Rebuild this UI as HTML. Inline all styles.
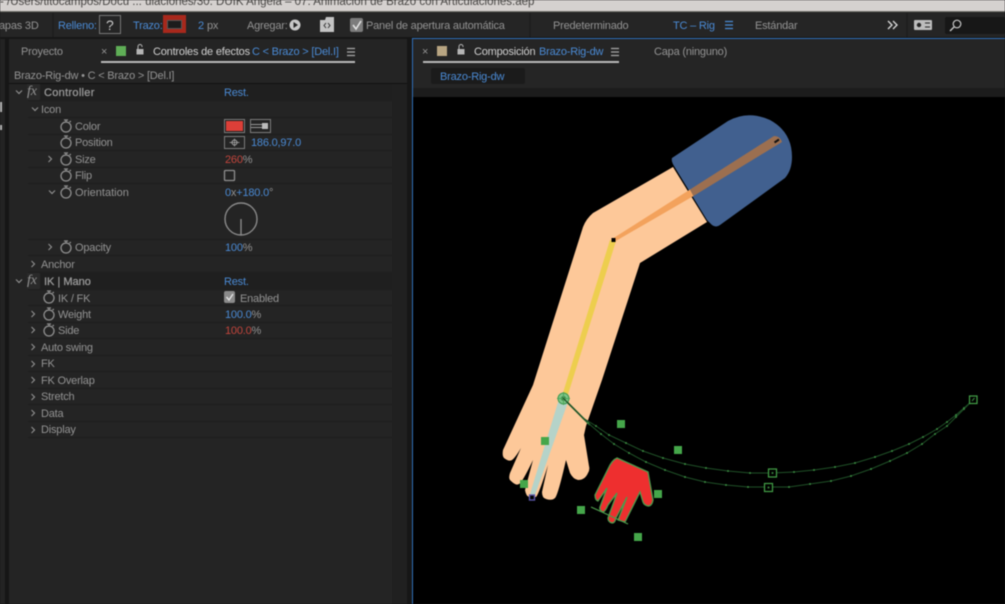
<!DOCTYPE html>
<html><head><meta charset="utf-8"><style>
html,body{margin:0;padding:0;background:#1a1a1a}
#p{position:relative;width:1005px;height:604px;overflow:hidden;background:#161616;font:11px/16px "Liberation Sans",sans-serif;letter-spacing:-.2px;color:#939393;filter:blur(.45px)}
#p span,#p b{position:absolute;white-space:nowrap;font-weight:normal}
.b{color:#4a8ad4}.r{color:#c2453c}.l{color:#cfcfcf}.f{color:#9c9c9c;-webkit-text-stroke:.25px #9c9c9c}
#p div{position:absolute}
#p i{font-style:normal}
.ln{left:28px;width:364px;height:1px;background:#1e1e1e}
.fx{font:italic 14px/14px "Liberation Serif",serif!important}
svg{position:absolute;left:0;top:0;overflow:visible}
</style></head><body><div id="p">
<div style="left:0;top:0;width:1005px;height:11px;background:#d5d1cf"></div>
<div style="left:0;top:11px;width:1005px;height:1px;background:#77756f"></div>
<div style="left:0;top:12px;width:1005px;height:25px;background:#252525"></div>
<span style="left:0;top:-5px;font-size:11.5px;line-height:14px;letter-spacing:0;color:#4a4846">- /Users/titocampos/Docu ... ulaciones/30. DUIK Angela – 07. Animación de Brazo con Articulaciones.aep</span>
<div style="left:9px;top:39px;width:398px;height:565px;background:#242424"></div>
<div style="left:0;top:39px;width:5px;height:565px;background:#232323"></div>
<div style="left:0;top:102px;width:2px;height:10px;background:#b5b5b5"></div>
<div style="left:0;top:125px;width:2px;height:5px;background:#b5b5b5"></div>
<div style="left:392px;top:84px;width:15px;height:520px;background:#202020"></div>
<div style="left:412px;top:38px;width:593px;height:566px;background:#252525"></div>
<div style="left:412px;top:38px;width:593px;height:1px;background:#2f6fb8"></div>
<div style="left:412px;top:38px;width:1px;height:566px;background:#2f6fb8"></div>
<div style="left:413px;top:88px;width:592px;height:9px;background:#1c1c1c"></div>
<div style="left:413px;top:97px;width:592px;height:507px;background:#000"></div>
<div style="left:9px;top:83px;width:398px;height:1px;background:#111"></div>
<div style="left:28px;top:84px;width:364px;height:17px;background:#1f1f1f"></div>
<div style="left:28px;top:272px;width:364px;height:17px;background:#1f1f1f"></div>
<div style="left:27px;top:84px;width:13px;height:16px;background:#2a2a2a"></div>
<div style="left:27px;top:273px;width:13px;height:16px;background:#2a2a2a"></div>
<div class="ln" style="top:100px"></div><div class="ln" style="top:117px"></div><div class="ln" style="top:134px"></div><div class="ln" style="top:150px"></div><div class="ln" style="top:167px"></div><div class="ln" style="top:183px"></div><div class="ln" style="top:239px"></div><div class="ln" style="top:255px"></div><div class="ln" style="top:272px"></div><div class="ln" style="top:289px"></div><div class="ln" style="top:305px"></div><div class="ln" style="top:322px"></div><div class="ln" style="top:338px"></div><div class="ln" style="top:355px"></div><div class="ln" style="top:371px"></div><div class="ln" style="top:388px"></div><div class="ln" style="top:404px"></div><div class="ln" style="top:421px"></div><div class="ln" style="top:437px"></div>
<span style="left:-1px;top:18px">apas 3D</span>
<span class="b" style="left:58px;top:18px">Relleno:</span>
<span class="b" style="left:133px;top:18px">Trazo:</span>
<span class="b" style="left:198px;top:18px">2</span><span style="left:207px;top:18px">px</span>
<span style="left:247px;top:18px">Agregar:</span>
<span style="left:366px;top:18px">Panel de apertura automática</span>
<span style="left:553px;top:18px">Predeterminado</span>
<span class="b" style="left:673px;top:18px">TC – Rig</span>
<span style="left:755px;top:18px">Estándar</span>
<span class="l" style="left:972px;top:18px">Buscar</span>
<div style="left:99px;top:15px;width:20px;height:17px;border:1px solid #777"></div>
<span style="left:106px;top:17px;color:#c8c8c8;font-size:14px">?</span>
<div style="left:163px;top:15px;width:23px;height:18px;background:#a8281c"></div>
<div style="left:167px;top:20px;width:13px;height:7px;background:#1c1c1c;border:1px solid #555"></div>
<div style="left:350px;top:18px;width:13px;height:14px;background:#7c7c7c;border-radius:2px"></div>
<div style="left:945px;top:17px;width:60px;height:17px;background:#171717;border-radius:2px"></div>
<span style="left:21px;top:44px">Proyecto</span>
<span style="left:101px;top:44px">×</span>
<span class="l" style="left:153px;top:44px">Controles de efectos</span>
<span class="b" style="left:252px;top:44px">C &lt; Brazo &gt; [Del.I]</span>
<div style="left:116px;top:46px;width:10px;height:10px;background:#5fae56"></div>
<div style="left:101px;top:61px;width:254px;height:2px;background:#b9b9b9"></div>
<span style="left:14px;top:68px">Brazo-Rig-dw • C &lt; Brazo &gt; [Del.I]</span>
<span style="left:422px;top:44px">×</span>
<div style="left:437px;top:46px;width:10px;height:10px;background:#b8a582"></div>
<span class="l" style="left:474px;top:44px">Composición</span>
<span class="b" style="left:539px;top:44px">Brazo-Rig-dw</span>
<div style="left:423px;top:61px;width:196px;height:2px;background:#b9b9b9"></div>
<span style="left:654px;top:44px">Capa (ninguno)</span>
<div style="left:431px;top:68px;width:94px;height:16px;background:#1b1b1b;border-radius:2px"></div>
<span class="b" style="left:440px;top:69px">Brazo-Rig-dw</span>

<span class="fx" style="left:27px;top:85px">fx</span><span class="f" style="left:44px;top:85px;letter-spacing:.3px">Controller</span><span class="b" style="left:224px;top:85px">Rest.</span>
<span style="left:41px;top:102px">Icon</span>
<span style="left:75px;top:119px">Color</span>
<span style="left:75px;top:135px">Position</span><span class="b" style="left:251px;top:135px">186.0,97.0</span>
<span style="left:75px;top:152px">Size</span><span style="left:225px;top:152px"><i class="r">260</i>%</span>
<span style="left:75px;top:168px">Flip</span>
<span style="left:75px;top:185px;letter-spacing:0">Orientation</span><span style="left:225px;top:185px"><i class="b">0</i>x<i class="b">+180.0</i>°</span>
<span style="left:75px;top:240px">Opacity</span><span style="left:225px;top:240px"><i class="b">100</i>%</span>
<span style="left:41px;top:257px">Anchor</span>
<span class="fx" style="left:27px;top:274px">fx</span><span class="f" style="left:44px;top:274px;letter-spacing:0">IK | Mano</span><span class="b" style="left:224px;top:274px">Rest.</span>
<span style="left:58px;top:291px">IK / FK</span><span style="left:240px;top:291px">Enabled</span>
<span style="left:58px;top:307px">Weight</span><span style="left:225px;top:307px"><i class="b">100.0</i>%</span>
<span style="left:58px;top:323px">Side</span><span style="left:225px;top:323px"><i class="r">100.0</i>%</span>
<span style="left:41px;top:340px">Auto swing</span>
<span style="left:41px;top:356px">FK</span>
<span style="left:41px;top:373px">FK Overlap</span>
<span style="left:41px;top:389px">Stretch</span>
<span style="left:41px;top:406px">Data</span>
<span style="left:41px;top:422px">Display</span>

<svg width="1005" height="604" viewBox="0 0 1005 604" fill="none">
<defs>
<g id="sw" stroke="#8f8f8f" stroke-width="1.300"><circle cx="0" cy="1" r="5"/><path d="M-2-6H2M0-6V-4M3.600-3.800L4.800-5"/></g>
<path id="cr" d="M-1.500-3L1.500 0L-1.500 3" stroke="#8d8d8d" stroke-width="1.200"/>
<path id="cd" d="M-3-1.500L0 1.500L3-1.500" stroke="#8d8d8d" stroke-width="1.200"/>
<g id="hb" stroke-width="1.200"><path d="M-4-3.500H4M-4 0H4M-4 3.500H4"/></g>
<rect id="gs" x="-4" y="-4" width="8" height="8" fill="#45a64a"/>
<marker id="dot" markerUnits="userSpaceOnUse" markerWidth="4" markerHeight="4" refX="2" refY="2"><circle cx="2" cy="2" r="1" fill="#3a8a40"/></marker>
</defs>
<!-- toolbar icons -->
<path d="M53 13V37M530 13V37M907 13V37" stroke="#1b1b1b"/>
<circle cx="295" cy="25" r="5.500" fill="#c8c8c8"/><path d="M293.500 22L298 25L293.500 28Z" fill="#252525"/>
<path d="M320 20H325L326 17H334V32H320Z" fill="#c4c4c4"/><path d="M326 23L324 25.500L326 28M328 23L330 25.500L328 28" stroke="#333"/>
<path d="M353 25L356 29L361 21" stroke="#e2e2e2" stroke-width="1.600"/>
<use href="#hb" x="729" y="25" stroke="#4a8ad4"/>
<path d="M888 21L892 25L888 29M893 21L897 25L893 29" stroke="#d5d5d5" stroke-width="1.400"/>
<rect x="914" y="20" width="18" height="10" rx="1" fill="#bdbdbd"/><circle cx="919" cy="25" r="2.200" fill="#252525"/><path d="M925 23H930M925 27H930" stroke="#252525"/>
<circle cx="957" cy="24" r="3.800" stroke="#c8c8c8" stroke-width="1.200"/><path d="M954 27L950 31" stroke="#c8c8c8" stroke-width="1.400"/>
<!-- tab icons -->
<rect x="136.500" y="49" width="7" height="5.500" fill="#b5b5b5"/><path d="M138 49V46.500A2 2 0 0 1 142 46.500V47" stroke="#b5b5b5"/>
<rect x="457.500" y="49" width="7" height="5.500" fill="#b5b5b5"/><path d="M459 49V46.500A2 2 0 0 1 463 46.500V47" stroke="#b5b5b5"/>
<use href="#hb" x="351" y="52" stroke="#a8a8a8"/><use href="#hb" x="615" y="52" stroke="#a8a8a8"/>
<!-- chevrons -->
<use href="#cd" x="19" y="92"/><use href="#cd" x="35" y="109"/><use href="#cr" x="50" y="159"/><use href="#cd" x="52" y="192"/><use href="#cr" x="50" y="247"/><use href="#cr" x="33" y="264"/><use href="#cd" x="19" y="281"/>
<use href="#cr" x="33" y="314"/><use href="#cr" x="33" y="330"/><use href="#cr" x="33" y="347"/><use href="#cr" x="33" y="364"/><use href="#cr" x="33" y="380"/><use href="#cr" x="33" y="397"/><use href="#cr" x="33" y="413"/><use href="#cr" x="33" y="430"/>
<!-- stopwatches -->
<use href="#sw" x="66" y="126"/><use href="#sw" x="66" y="142"/><use href="#sw" x="66" y="159"/><use href="#sw" x="66" y="175"/><use href="#sw" x="66" y="192"/><use href="#sw" x="66" y="247"/>
<use href="#sw" x="49" y="297"/><use href="#sw" x="49" y="314"/><use href="#sw" x="49" y="330"/>
<!-- controls -->
<rect x="224.500" y="119.500" width="20" height="13" stroke="#7c7c7c" fill="#1d1d1d"/><rect x="226" y="121" width="17" height="10" fill="#dc3f38"/>
<rect x="250.500" y="119.500" width="20" height="13" stroke="#7c7c7c"/><path d="M251 124.500H262M251 127.500H262" stroke="#999"/><rect x="262" y="123" width="6" height="6" fill="#bbb"/>
<rect x="224.500" y="136.500" width="20" height="12" stroke="#7c7c7c"/><circle cx="234.500" cy="142.500" r="2.500" stroke="#a8a8a8"/><path d="M229.500 142.500H239.500M234.500 138.500V146.500" stroke="#a8a8a8" stroke-width=".7"/>
<rect x="224.500" y="170.500" width="10" height="10" rx="1" stroke="#8f8f8f" stroke-width="1.300"/>
<circle cx="241" cy="219" r="16" stroke="#8a8a8a" stroke-width="1.400"/><path d="M241 219V235" stroke="#8a8a8a" stroke-width="1.400"/>
<rect x="224" y="291" width="11" height="12" rx="2" fill="#8a8a8a"/><path d="M226.500 297L229 300L233 294" stroke="#e0e0e0" stroke-width="1.400"/>
<!-- viewer -->
<path d="M673 167L593 213Q586 219 583 227L533 385L503 450Q502 456 504 458Q509 462 512 460Q515 458 521 448L510 473Q508 479 511 481Q516 486 519 484Q522 483 533 460L525 490Q526 496 529 497L536 497Q539 494 548 465L542 492Q542 498 546 499Q552 501 555 498Q558 495 566 460L570 473Q573 479 578 480Q585 480 588 473Q590 470 589 466L584 435L586 426L602 380L640 263L707 222Z" fill="#fdc899"/>
<path d="M672 158L728 121Q748 110 770 120Q792 132 792 157Q792 170 785 178L720 225Q716 228 712 225L707 220L674 166Q671 161 672 158Z" fill="#41608f"/>
<path d="M612 239L690 189.500L693.500 196L614 242Z" fill="#f3a25c"/>
<path d="M690 189.500L774 136Q780 136 782 142L693.500 196Z" fill="#9c6f50"/>
<path d="M774.500 142.500L779 139.500" stroke="#111" stroke-width="2"/>
<path d="M610 240L616 241L567.500 396L562 396Z" fill="#edce4e"/>
<rect x="611.500" y="238" width="4" height="4" fill="#000"/>
<path d="M559 399L568 402L535 495L530 494Z" fill="#b5d3c9"/>
<path d="M617 458L648 472L653 500Q652 506 648 506Q644 505 643 502L640 492L625 522L618 520L627 497L616 518Q615 523 612 523Q608 522 608 518L617 493L608 505Q605 512 603 512Q599 510 600 507L607 488L598 501Q595 500 595 495L608 469Q612 460 617 458Z" fill="#ee2f2f" stroke="#4d9a4c" stroke-width="1.300"/>
<path d="M591 507L628 524" stroke="#4d9a4c" stroke-width="1.200"/>
<rect x="529.500" y="495" width="5" height="5" stroke="#5a56a8" stroke-width="1.400" fill="#000"/>
<path d="M565 400L590 425" stroke="#2f6f38" stroke-width="1.800"/>
<circle cx="563.500" cy="398.500" r="5.500" fill="#7dc488" stroke="#3f9a50"/><circle cx="563.500" cy="398.500" r="2.500" fill="#3b8a48"/><path d="M557 398.500H570M563.500 392V405" stroke="#4fa75c"/>
<polyline points="563,398 583,418 596,426 609,435 626,443 643,451 663,458 685,464 706,468 728,471 750,473 772,473 794,472 814,470 835,467 855,463 875,457 892,451 909,444 923,437 937,429 947,422 956,415 964,408 973,400" stroke="#1f5027" marker-mid="url(#dot)"/>
<polyline points="563,398 588,423 601,434 614,444 629,453 646,462 665,470 685,477 705,482 726,485 748,487 768,487 789,487 810,484 831,481 851,476 871,469 890,461 907,453 922,444 935,434 947,426 956,417 964,409 973,400" stroke="#1f5027" marker-mid="url(#dot)"/>
<rect x="768.500" y="469" width="8" height="8" stroke="#43a047" stroke-width="1.200" fill="#000"/><rect x="764.500" y="483.500" width="8" height="8" stroke="#43a047" stroke-width="1.200" fill="#000"/><rect x="969.500" y="396" width="7.500" height="7.500" stroke="#43a047" stroke-width="1.200" fill="#000"/>
<circle cx="772.500" cy="473" r="1" fill="#3a8a40"/><circle cx="768.500" cy="487.500" r="1" fill="#3a8a40"/><path d="M972 401L974.500 398" stroke="#3a8a40"/>
<use href="#gs" x="621" y="424"/><use href="#gs" x="678" y="450"/><use href="#gs" x="658" y="494"/><use href="#gs" x="638" y="537"/><use href="#gs" x="581" y="510"/><use href="#gs" x="545" y="441"/><use href="#gs" x="524" y="484"/>
</svg>
</div></body></html>
